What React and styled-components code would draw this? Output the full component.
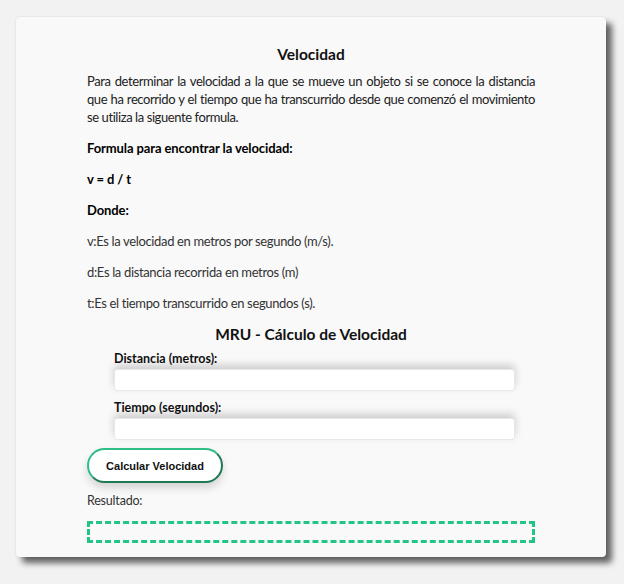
import styled, { createGlobalStyle } from 'styled-components'

const GlobalStyle = createGlobalStyle`
  html, body {
    margin: 0;
    background: #f2f2f2;
  }
  body {
    font-family: Lato, "Segoe UI", sans-serif;
    color: #111;
  }
`;

const App = () => {
    return (
        <Page>
            <GlobalStyle />
            <Card>
                <Content>
                    <Title>Velocidad</Title>
                    <Intro>
                        Para determinar la velocidad a la que se mueve un objeto si se conoce la distancia
                        que ha recorrido y el tiempo que ha transcurrido desde que comenzó el movimiento
                        se utiliza la siguente formula.
                    </Intro>
                    <Text bold>Formula para encontrar la velocidad:</Text>
                    <Text bold>v = d / t</Text>
                    <Text bold>Donde:</Text>
                    <Text>v:Es la velocidad en metros por segundo (m/s).</Text>
                    <Text>d:Es la distancia recorrida en metros (m)</Text>
                    <Text last>t:Es el tiempo transcurrido en segundos (s).</Text>
                    <SubTitle>MRU - Cálculo de Velocidad</SubTitle>
                    <Form>
                        <Field>
                            <Label>Distancia (metros):</Label>
                            <Input type="number" />
                        </Field>
                        <Field>
                            <Label>Tiempo (segundos):</Label>
                            <Input type="number" />
                        </Field>
                    </Form>
                    <Button>Calcular Velocidad</Button>
                    <ResultLabel>Resultado:</ResultLabel>
                    <ResultBox />
                </Content>
            </Card>
        </Page>
    );
};

const Page = styled.div`
  padding: 17px 18px 27px 16px;
`;

const Card = styled.div`
  width: 590px;
  box-sizing: border-box;
  background: #f9f9f9;
  border-radius: 4px;
  box-shadow: 6px 6px 6px rgba(0, 0, 0, 0.6), 0 0 2px rgba(0, 0, 0, 0.12);
  padding: 26px 0 14px;
`;

const Content = styled.div`
  width: 448px;
  margin: 0 auto;
`;

const Title = styled.h2`
  margin: 0 0 7px;
  text-align: center;
  font-size: 15.5px;
  font-weight: 700;
  line-height: 22px;
`;

const Intro = styled.p`
  margin: 0 0 13px;
  font-size: 13px;
  line-height: 18px;
  letter-spacing: -0.42px;
  text-align: justify;
  color: #222;
`;

const Text = styled.p`
  margin: 0 0 ${(p) => (p.last ? '11px' : '13px')};
  font-size: 13px;
  line-height: 18px;
  letter-spacing: ${(p) => (p.bold ? '-0.1px' : '-0.35px')};
  font-weight: ${(p) => (p.bold ? 700 : 400)};
  color: ${(p) => (p.bold ? '#000' : '#333')};
`;

const SubTitle = styled.h3`
  margin: 0 0 6px;
  text-align: center;
  font-size: 15.5px;
  font-weight: 700;
  line-height: 22px;
`;

const Form = styled.div`
  display: flex;
  flex-direction: column;
  gap: 9px;
  padding: 0 20px 0 27px;
`;

const Field = styled.div`
  display: flex;
  flex-direction: column;
  gap: 2px;
`;

const Label = styled.label`
  font-size: 12.5px;
  font-weight: 700;
  line-height: 16px;
  color: #111;
`;

const Input = styled.input`
  height: 22px;
  box-sizing: border-box;
  border: 1px solid #e8e8e8;
  border-radius: 3px;
  background: #fff;
  box-shadow: 0 -4px 9px rgba(0, 0, 0, 0.18);
  outline: none;
`;

const Button = styled.button`
  display: block;
  margin: 8px 0 0;
  width: 136px;
  height: 35px;
  border-radius: 18px;
  border: 2px solid #2fbf86;
  border-bottom-color: #1f7a54;
  border-right-color: #1f7a54;
  background: #fff;
  font-family: "Liberation Sans", Arial, sans-serif;
  font-size: 11px;
  font-weight: 700;
  color: #111;
  box-shadow: 0 5px 8px rgba(0, 0, 0, 0.15);
  cursor: pointer;
`;

const ResultLabel = styled.div`
  margin-top: 10px;
  font-size: 12.5px;
  letter-spacing: -0.2px;
  line-height: 16px;
  color: #333;
`;

const ResultBox = styled.div`
  margin-top: 12px;
  height: 22px;
  box-sizing: border-box;
  border: 3px dashed #22c585;
`;

export default App
